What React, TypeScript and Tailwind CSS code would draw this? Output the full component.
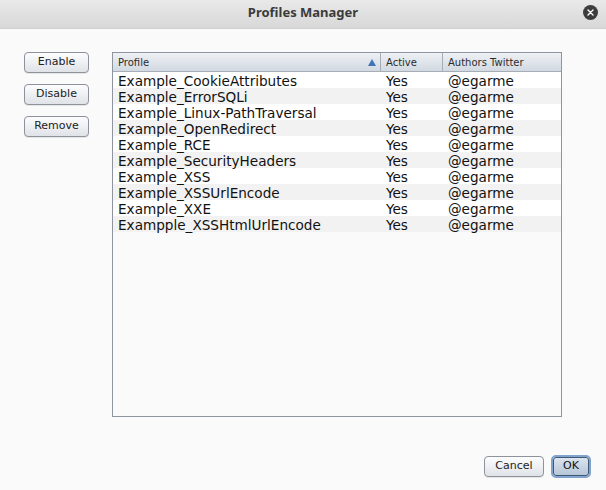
import React from "react";

const rows = [
  "Example_CookieAttributes",
  "Example_ErrorSQLi",
  "Example_Linux-PathTraversal",
  "Example_OpenRedirect",
  "Example_RCE",
  "Example_SecurityHeaders",
  "Example_XSS",
  "Example_XSSUrlEncode",
  "Example_XXE",
  "Exampple_XSSHtmlUrlEncode",
];

function Btn({ label, w = "w-[65px]" }: { label: string; w?: string }) {
  return (
    <div
      className={`${w} h-[21px] rounded-[4px] border border-[#8d929b] bg-gradient-to-b from-[#fdfdfe] to-[#dfe2e7] flex items-center justify-center text-[11px] text-[#222] shadow-[0_1px_0_rgba(0,0,0,0.08)]`}
    >
      {label}
    </div>
  );
}

export default function App() {
  return (
    <div
      className="w-[606px] h-[490px] bg-[#fafafa] flex flex-col overflow-hidden"
      style={{ fontFamily: '"DejaVu Sans", sans-serif' }}
    >
      <div className="h-[29px] relative flex items-center justify-center pb-[3px] bg-gradient-to-b from-[#e9e9e9] to-[#d8d8d8] border-b border-[#cfcfcf]">
        <span
          className="text-[13px] font-bold text-[#3b3b3b]"
          style={{ fontFamily: '"Noto Sans", sans-serif' }}
        >
          Profiles Manager
        </span>
        <div className="absolute left-[583px] top-[5px] w-[15px] h-[15px] rounded-full bg-[#3d3d3d] flex items-center justify-center">
          <svg width="7" height="7" viewBox="0 0 7 7">
            <path d="M1 1L6 6M6 1L1 6" stroke="#fff" strokeWidth="1.4" strokeLinecap="round" />
          </svg>
        </div>
      </div>

      <div className="flex pt-[23px] pl-[24px]">
        <div className="flex flex-col gap-[11px] w-[65px]">
          <Btn label="Enable" />
          <Btn label="Disable" />
          <Btn label="Remove" />
        </div>
        <div className="ml-[23px] w-[450px] h-[365px] border border-[#8f95a0] bg-[#fafafa] flex flex-col">
          <div className="flex h-[19px] bg-gradient-to-b from-[#eef1f5] to-[#d3d9e1] border-b border-[#a7adb7] text-[10px] text-[#2b2b2b]">
            <div className="w-[268px] flex items-center justify-between pl-[5px] pr-[4px] border-r border-[#a7adb7]">
              <span>Profile</span>
              <svg width="8" height="7" viewBox="0 0 8 7">
                <path d="M4 0L8 7H0Z" fill="#3f74b8" />
              </svg>
            </div>
            <div className="w-[62px] flex items-center pl-[5px] border-r border-[#a7adb7]">Active</div>
            <div className="flex-1 flex items-center pl-[5px]">Authors Twitter</div>
          </div>
          {rows.map((r, i) => (
            <div
              key={r}
              className={`flex h-[16px] text-[13.6px] leading-[16px] text-[#111] ${i % 2 === 0 ? "bg-white" : "bg-[#f2f2f2]"}`}
            >
              <div className="relative top-[1px] w-[268px] pl-[5px] whitespace-nowrap">{r}</div>
              <div className="relative top-[1px] w-[62px] pl-[5px]">Yes</div>
              <div className="relative top-[1px] flex-1 pl-[5px]">@egarme</div>
            </div>
          ))}
        </div>
      </div>

      <div className="flex justify-end gap-[7px] pr-[15px] mt-[38px] items-center">
        <Btn label="Cancel" w="w-[60px]" />
        <div className="w-[40px] h-[23px] rounded-[5px] border-2 border-[#7fa3cc] p-0">
          <div className="w-full h-full rounded-[3px] border border-[#3f5873] bg-gradient-to-b from-[#dbe4ee] to-[#b6c6d8] flex items-center justify-center text-[11px] text-[#111]">
            OK
          </div>
        </div>
      </div>
    </div>
  );
}
